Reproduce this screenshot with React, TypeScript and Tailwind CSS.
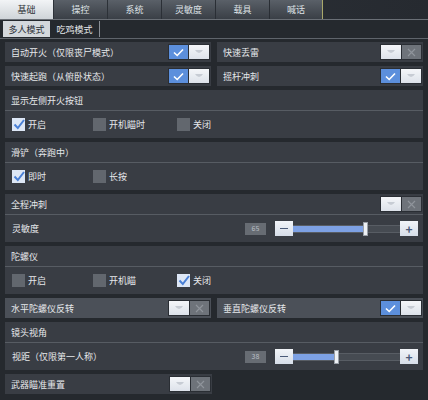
import React from "react";

const tabs = ["基础", "操控", "系统", "灵敏度", "载具", "喊话"];

function Knob() {
  return (
    <div className="w-[20px] h-full bg-gradient-to-b from-[#f4f6f9] to-[#dde2ea] flex items-center justify-center">
      <svg width="10" height="6" viewBox="0 0 10 6">
        <path d="M1 1 Q5 7 9 1 Z" fill="#c7ccd4" />
      </svg>
    </div>
  );
}

function Toggle({ on }: { on: boolean }) {
  return (
    <div className="flex h-[16px] w-[42px] gap-px border border-[#2a2e34] bg-[#2a2e34]">
      {on ? (
        <>
          <div className="flex-1 bg-[#5c8fdc] flex items-center justify-center">
            <svg width="11" height="9" viewBox="0 0 11 9">
              <path d="M1 4.5 L4.2 7.5 L10 1.5" stroke="#ffffff" strokeWidth="1.6" fill="none" />
            </svg>
          </div>
          <Knob />
        </>
      ) : (
        <>
          <Knob />
          <div className="flex-1 bg-[#6e737a] flex items-center justify-center">
            <svg width="9" height="9" viewBox="0 0 9 9">
              <path d="M1 1 L8 8 M8 1 L1 8" stroke="#8f949b" strokeWidth="1.2" />
            </svg>
          </div>
        </>
      )}
    </div>
  );
}

function Check({ checked, label, w }: { checked?: boolean; label: string; w: string }) {
  return (
    <div className={`flex items-center gap-[3px] ${w}`}>
      {checked ? (
        <div className="w-[13px] h-[13px] bg-[#dde7f6] flex items-center justify-center">
          <svg width="12" height="11" viewBox="0 0 12 11">
            <path d="M1.5 5.5 L4.8 9 L11 1" stroke="#4a80d6" strokeWidth="2" fill="none" />
          </svg>
        </div>
      ) : (
        <div className="w-[13px] h-[13px] bg-[#62676e]" />
      )}
      <span>{label}</span>
    </div>
  );
}

function Slider({ value }: { value: number }) {
  return (
    <div className="flex items-center pr-[5px]">
      <div className="w-[21px] h-[12px] bg-[#676c73] text-[7px] text-[#b9bec5] flex items-center justify-center mr-[9px]">
        {value}
      </div>
      <div className="w-[18px] h-[15px] bg-gradient-to-b from-[#f1f4f8] to-[#d6dde8] flex items-center justify-center">
        <div className="w-[8px] h-[1.5px] bg-[#4a5a78]" />
      </div>
      <div className="relative w-[107px] h-[8px] bg-[#464b52] border-y border-[#585d64]">
        <div className="h-full bg-[#7da1e4]" style={{ width: `${value}%` }} />
        <div
          className="absolute top-[-4px] w-[5px] h-[14px] bg-[#eef1f5] border border-[#9aa0a8]"
          style={{ left: `${value}%` }}
        />
      </div>
      <div className="w-[18px] h-[15px] bg-gradient-to-b from-[#f1f4f8] to-[#d6dde8] flex items-center justify-center text-[#4a5a78] text-[12px] leading-none font-bold">
        +
      </div>
    </div>
  );
}

function Panel({ label, on, light }: { label: string; on: boolean; light?: boolean }) {
  return (
    <div className={`flex-1 h-full flex items-center justify-between pl-[6px] pr-px ${light ? "bg-[#4b5058]" : "bg-[#393d44]"}`}>
      <span>{label}</span>
      <Toggle on={on} />
    </div>
  );
}

function Line() {
  return <div className="h-px bg-[#575c63]" />;
}

export default function App() {
  return (
    <div className="w-[428px] h-[400px] overflow-hidden bg-[#25292e] text-[9px] text-[#e6e8eb] font-['Noto_Sans_CJK_SC','Noto_Sans',sans-serif] leading-none">
      {/* Tabs */}
      <div className="flex h-[20px] border-b border-[#6a6f76] bg-gradient-to-r from-[#2e333a] to-[#262a30]">
        {tabs.map((t, i) => (
          <div
            key={t}
            className={`w-[53px] mr-px flex items-center justify-center ${
              i === 0
                ? "bg-gradient-to-b from-[#f2f4f6] to-[#cfd4d9] text-[#2c3036]"
                : "bg-gradient-to-b from-[#5a6068] to-[#3a3f46] text-[#dfe2e6]"
            } ${i === 5 ? "border-r border-[#a9a86a]" : ""}`}
          >
            {t}
          </div>
        ))}
      </div>

      {/* Sub tabs */}
      <div className="flex items-center h-[19px] px-[3px] border-b border-[#5f646b]">
        <div className="h-[16px] w-[47px] bg-[#d4d8dc] text-[#2a2e34] flex items-center justify-center">多人模式</div>
        <div className="h-[16px] w-[50px] flex items-center justify-center border-r border-[#8a8f96]">吃鸡模式</div>
      </div>

      <div className="flex flex-col gap-[4px] px-[5px] pt-[3px]">
        <div className="flex gap-[6px] h-[20px]">
          <Panel label="自动开火（仅限丧尸模式）" on />
          <Panel label="快速丢雷" on={false} />
        </div>
        <div className="flex gap-[6px] h-[20px]">
          <Panel label="快速起跑（从俯卧状态）" on />
          <Panel label="摇杆冲刺" on />
        </div>

        <div className="bg-[#393d44]">
          <div className="h-[20px] flex items-center pl-[6px]">显示左侧开火按钮</div>
          <Line />
          <div className="h-[27px] flex items-center pl-[7px]">
            <Check checked label="开启" w="w-[81px]" />
            <Check label="开机瞄时" w="w-[84px]" />
            <Check label="关闭" w="w-[60px]" />
          </div>
        </div>

        <div className="bg-[#393d44]">
          <div className="h-[20px] flex items-center pl-[6px]">滑铲（奔跑中）</div>
          <Line />
          <div className="h-[27px] flex items-center pl-[7px]">
            <Check checked label="即时" w="w-[81px]" />
            <Check label="长按" w="w-[84px]" />
          </div>
        </div>

        <div className="bg-[#393d44]">
          <div className="h-[20px] flex items-center justify-between pl-[6px] pr-px">
            <span>全程冲刺</span>
            <Toggle on={false} />
          </div>
          <Line />
          <div className="h-[27px] flex items-center justify-between pl-[7px]">
            <span>灵敏度</span>
            <Slider value={65} />
          </div>
        </div>

        <div className="bg-[#393d44]">
          <div className="h-[20px] flex items-center pl-[6px]">陀螺仪</div>
          <Line />
          <div className="h-[27px] flex items-center pl-[7px]">
            <Check label="开启" w="w-[81px]" />
            <Check label="开机瞄" w="w-[84px]" />
            <Check checked label="关闭" w="w-[60px]" />
          </div>
        </div>

        <div className="flex gap-[6px] h-[20px]">
          <Panel label="水平陀螺仪反转" on={false} light />
          <Panel label="垂直陀螺仪反转" on light />
        </div>

        <div className="bg-[#393d44]">
          <div className="h-[20px] flex items-center pl-[6px]">镜头视角</div>
          <Line />
          <div className="h-[27px] flex items-center justify-between pl-[7px]">
            <span>视距（仅限第一人称）</span>
            <Slider value={38} />
          </div>
        </div>

        <div className="flex gap-[6px] h-[20px]">
          <div className="w-[207px] h-full">
            <Panel label="武器瞄准重置" on={false} />
          </div>
        </div>
      </div>
    </div>
  );
}
